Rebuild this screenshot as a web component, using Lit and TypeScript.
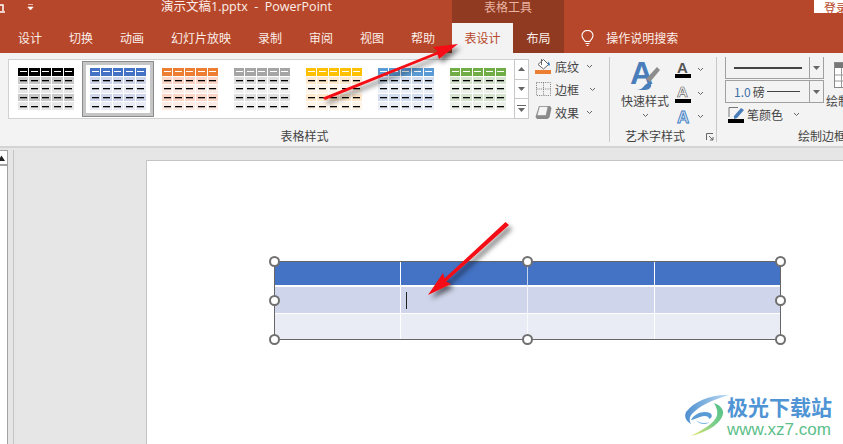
import { LitElement, html, css, svg } from "lit";
import { customElement } from "lit/decorators.js";

const thumbs = [
  ["#000000", "#c9c9c9", "#e7e7e7", "#fff"],
  ["#4472c4", "#cfd5ea", "#e9ebf5", "#fff"],
  ["#ed7d31", "#fbd5c6", "#fdece6", "#fff"],
  ["#a5a5a5", "#dedede", "#f0f0f0", "#fff"],
  ["#ffc000", "#ffe8cc", "#fff4e8", "#fff"],
  ["#5b9bd5", "#d2deef", "#eaeff7", "#fff"],
  ["#70ad47", "#d5e3cf", "#ebf1e9", "#fff"],
];

const tabs = ["设计", "切换", "动画", "幻灯片放映", "录制", "审阅", "视图", "帮助"];

const chev = html`<svg class="chev" width="7" height="5" viewBox="0 0 7 5"><path d="M1 1l2.5 2.5L6 1" fill="none" stroke="#666" stroke-width="1"/></svg>`;
const tri = (up = false) => html`<svg width="9" height="6" viewBox="0 0 9 6"><path d="${up ? "M4.5 1L8 5H1z" : "M1 1h7L4.5 5z"}" fill="#666"/></svg>`;

@customElement("app-root")
export class AppRoot extends LitElement {
  static styles = css`
    :host { display: block; width: 843px; height: 444px; position: relative; overflow: hidden;
      font-family: "Noto Sans CJK SC", "Liberation Sans", sans-serif; font-size: 12px; color: #333; background: #e6e6e6; }
    .page { display: flex; flex-direction: column; height: 444px; }
    .titlebar { height: 23px; flex: none; background: #b7472a; display: flex; align-items: flex-start; color: #fff; }
    .qa { width: 36px; height: 13px; display: flex; flex: none; align-items: center; gap: 21px; padding-top: 1px; }
    .doc { width: 291px; margin-left: 125px; flex: none; line-height: 13px; white-space: pre; font-family: "Open Sans", "Noto Sans CJK SC", sans-serif; font-size: 12.5px; color: #fbeee9; }
    .cap { width: 112px; height: 23px; flex: none; background: #8f3a21; color: #e9b4a2; text-align: center; line-height: 13px; }
    .login { width: 19px; height: 13px; margin-left: 250px; flex: none; background: #fff; color: #b7472a; line-height: 16px; padding-left: 10px; white-space: nowrap; overflow: hidden; }
    .tabs { height: 30px; flex: none; background: #b7472a; display: flex; align-items: stretch; color: #fff; padding-left: 18px; }
    .tab { margin-right: 27px; line-height: 30px; color: #fbeee9; white-space: nowrap; }
    .tab.last { margin-right: 17px; }
    .active { background: #f3f3f3; color: #b7472a; width: 61px; text-align: center; line-height: 30px; flex: none; }
    .layout { background: #8f3a21; color: #fbeee9; width: 51px; text-align: center; line-height: 30px; flex: none; }
    .bulb { margin-left: 17px; margin-right: 12px; align-self: center; display: flex; }
    .help { line-height: 30px; color: #fbeee9; }
    .ribbon { height: 93px; flex: none; background: #f3f3f3; border-bottom: 2px solid #d4d4d4; display: flex; overflow: hidden; }
    .group { display: flex; flex-direction: column; flex: none; box-sizing: border-box; margin-top: 4px; margin-bottom: 4px; }
    .inner { margin-top: -4px; margin-bottom: -4px; display: flex; flex-direction: column; height: 93px; }
    .g1 { width: 610px; border-right: 1px solid #c8c8c8; }
    .g2 { width: 107px; border-right: 1px solid #c8c8c8; }
    .g3 { width: 126px; overflow: hidden; }
    .body { flex: 1; display: flex; min-height: 0; }
    .label { height: 19px; line-height: 17px; text-align: center; font-size: 12px; color: #444; flex: none; white-space: nowrap; }
    .g1 .body { padding: 6px 0 0 8px; }
    .gallery { height: 60px; width: 507px; flex: none; box-sizing: border-box; background: #fff; border: 1.5px solid #d2d2d2; display: flex; align-items: flex-start; padding: 1px 0 0 1px; }
    .item { width: 72px; height: 56px; flex: none; box-sizing: border-box; padding: 6px 7px; border: 1px solid transparent; }
    .item.sel { border: 1px solid #8b8b8b; outline: 3px solid #c6c6c6; outline-offset: -4px; }
    .thumb { display: grid; grid-template-columns: repeat(5, 1fr); grid-template-rows: repeat(5, 1fr); gap: 1px; width: 56px; height: 42px; }
    .cell { display: flex; align-items: center; justify-content: center; }
    .dash { width: 7px; height: 1px; display: block; background: #000; box-shadow: 0 1px 0 rgba(0,0,0,.3); }
    .dash.w { background: #fff; box-shadow: none; }
    .scroll { width: 15px; height: 60px; flex: none; box-sizing: border-box; border: 1px solid #c8c8c8; display: flex; flex-direction: column; background: #fff; margin-left: -1px; }
    .scroll div { flex: 1; display: flex; align-items: center; justify-content: center; border-bottom: 1px solid #c8c8c8; }
    .scroll div:last-child { border-bottom: none; flex-direction: column; gap: 1px; }
    .bar { width: 9px; height: 1px; background: #666; display: block; }
    .cmds { margin-left: 6px; display: flex; flex-direction: column; gap: 7px; margin-top: -1px; }
    .cmd { height: 16px; display: flex; align-items: center; gap: 3px; white-space: nowrap; color: #444; }
    .cmd svg.ic { width: 17px; height: 16px; flex: none; }
    .cmd .chev { margin-left: 4px; }
    .cmd .chev.far { margin-left: 7px; }
    .g2 .body { padding: 6px 0 0 10px; gap: 5px; }
    .quick { display: flex; flex-direction: column; align-items: center; width: 50px; color: #444; }
    .quick span { line-height: 14px; margin-top: 2px; white-space: nowrap; }
    .quick .chev { margin-top: 5px; }
    .abc { display: flex; flex-direction: column; gap: 3px; }
    .abc div { display: flex; align-items: center; gap: 5px; height: 21px; }
    .g2 .label { display: flex; padding-left: 15px; align-items: flex-start; }
    .launch { margin: 6px 0 0 21px; display: block; }
    .g3 .body { padding: 3px 0 0 8px; gap: 2px; }
    .lines { width: 99px; flex: none; display: flex; flex-direction: column; }
    .ls { height: 23px; box-sizing: border-box; border: 1.5px solid #a0a0a0; display: flex; margin-bottom: 1px; }
    .ls .m { flex: 1; display: flex; align-items: center; padding-left: 8px; gap: 2px; color: #444; }
    .ls .d { width: 13px; border-left: 1.5px solid #a0a0a0; display: flex; align-items: center; justify-content: center; }
    .thick { width: 68px; height: 2px; background: #444; display: block; }
    .thin { width: 33px; height: 1px; background: #444; display: block; }
    .num { color: #3d6fa8; }
    .pen { display: flex; align-items: center; gap: 2px; margin-top: 1px; margin-left: 3px; height: 18px; color: #444; }
    .pen .chev { margin-left: 8px; }
    .draw { display: flex; flex-direction: column; width: 20px; flex: none; }
    .draw svg { margin: 6px 0 0 8px; }
    .draw span { line-height: 14px; margin-top: 6px; white-space: nowrap; color: #444; }
    .g3 .label { text-align: left; padding-left: 81px; }
    .work { flex: 1; display: flex; min-height: 0; padding-top: 2px; }
    .pane { width: 8px; flex: none; box-sizing: border-box; background: #fff; border-right: 1px solid #a3a3a3; border-top: 1px solid #a3a3a3; }
    .panehead { height: 13px; border-bottom: 2px solid #a3a3a3; background: #fff; display: flex; align-items: center; }
    .rail { width: 1px; flex: none; margin-left: 5px; background: #c4c4c4; }
    .slide { flex: 1; margin: 10px 0 0 132px; background: #fff; border: 1px solid #c4c4c4; border-width: 1px 0 0 1px; padding: 100px 0 0 127px; min-width: 0; }
    .table { width: 507px; height: 79px; box-sizing: border-box; border: 1px solid #666; position: relative; display: grid; grid-template-columns: 125px 127px 127px 1fr; grid-template-rows: 25px 27px 1fr; }
    .c { border-left: 1px solid #fff; box-sizing: border-box; }
    .c:nth-child(4n+1) { border-left: none; }
    .c:nth-child(4n+3) { border-left-color: rgba(255,255,255,.7); }
    .c.h { background: #4472c4; border-bottom: 2px solid #fff; }
    .c.a { background: #cfd5ea; border-bottom: 1px solid #fff; }
    .c.b { background: #e9ebf5; }
    .caret { display: block; width: 1px; height: 17px; background: #222; margin: 5px 0 0 5px; }
    .hd { position: absolute; width: 11px; height: 11px; box-sizing: border-box; border: 2px solid #707070; border-radius: 50%; background: #fff; }
    .x0 { left: -6px; } .x1 { left: 247px; } .x2 { left: 500px; }
    .y0 { top: -6px; } .y1 { top: 33px; } .y2 { top: 72px; }
    .arrows { position: absolute; left: 0; top: 0; pointer-events: none; }
    .mark { position: absolute; left: 684px; top: 392px; width: 150px; height: 46px; display: flex; }
    .marktext { display: flex; flex-direction: column; margin-left: -5px; }
    .cn { font-size: 21px; font-weight: 700; line-height: 26px; color: #4f94d4; white-space: nowrap; margin-top: 1px; }
    .en { font-family: "Liberation Sans", sans-serif; font-size: 17px; line-height: 17px; color: #5cc08a; white-space: nowrap; margin-top: 2px; }
  `;

  render() {
    const bands = [0, 1, 2, 1, 2];
    return html`
      <div class="page">
        <div class="titlebar">
          <div class="qa">
            <svg width="6" height="12" viewBox="0 0 6 12"><path d="M0 3h3v6M-1 10h6" fill="none" stroke="#fff" stroke-width="1.5"/></svg>
            <svg width="7" height="7" viewBox="0 0 7 7"><path d="M1 .5h5M0.8 3h5.4L3.5 6z" fill="#fff" stroke="#fff" stroke-width=".6"/></svg>
          </div>
          <div class="doc">演示文稿1.pptx  -  PowerPoint</div>
          <div class="cap">表格工具</div>
          <div class="login">登录</div>
        </div>
        <div class="tabs">
          ${tabs.map((t, i) => html`<div class="tab ${i === tabs.length - 1 ? "last" : ""}">${t}</div>`)}
          <div class="active">表设计</div>
          <div class="layout">布局</div>
          <div class="bulb"><svg width="13" height="17" viewBox="0 0 13 17"><path d="M4.2 11.5C3.6 9.6 1 8.6 1 5.6a5.5 5.2 0 0 1 11 0c0 3-2.6 4-3.2 5.9zM4.5 13.5h4M5.5 15.5h2" fill="none" stroke="#fff" stroke-width="1.1"/></svg></div>
          <div class="help">操作说明搜索</div>
        </div>
        <div class="ribbon">
          <div class="group g1">
            <div class="inner">
              <div class="body">
                <div class="gallery">
                  ${thumbs.map((t, i) => html`<div class="item ${i === 1 ? "sel" : ""}">
                    <div class="thumb">
                      ${bands.map((b, r) => [0, 1, 2, 3, 4].map(() => html`<div class="cell" style="background:${t[b]}"><i class="dash ${r === 0 ? "w" : ""}"></i></div>`))}
                    </div>
                  </div>`)}
                </div>
                <div class="scroll">
                  <div>${tri(true)}</div>
                  <div>${tri()}</div>
                  <div><i class="bar"></i>${tri()}</div>
                </div>
                <div class="cmds">
                  <div class="cmd">
                    <svg class="ic" viewBox="0 0 17 16"><path d="M3 6.5L8.5 1.5l5 5-5 4.5z" fill="#fff" stroke="#666"/><path d="M13 3.5c1.5 1.5 2.5 3 1.5 4s-2-1-1.500-4z" fill="#3d78b8"/><path d="M6.500 1v6" stroke="#666"/><rect x="0" y="12" width="16" height="4" fill="#ed7d31"/></svg>
                    底纹${chev}
                  </div>
                  <div class="cmd">
                    <svg class="ic" viewBox="0 0 17 16"><path d="M1.500 1.500h14v13h-14zM8.500 1.500v13M1.500 8h14" fill="none" stroke="#777" stroke-dasharray="1 1.200"/></svg>
                    边框<svg class="chev far" width="7" height="5" viewBox="0 0 7 5"><path d="M1 1l2.500 2.500L6 1" fill="none" stroke="#666"/></svg>
                  </div>
                  <div class="cmd">
                    <svg class="ic" viewBox="0 0 17 16"><path d="M4 2h11l1.500 2-2 9.500-2 1.500H2L.5 13z" fill="#8a8a8a"/><path d="M4.500 2.500H13L11 11.500H2z" fill="#f4f4f4" stroke="#8a8a8a" stroke-width=".6"/></svg>
                    效果${chev}
                  </div>
                </div>
              </div>
              <div class="label">表格样式</div>
            </div>
          </div>
          <div class="group g2">
            <div class="inner">
              <div class="body">
                <div class="quick">
                  <svg width="30" height="33" viewBox="0 0 30 33">
                    <text x="0" y="25" font-family="Liberation Sans, sans-serif" font-weight="700" font-size="32" fill="#4a7ebb">A</text>
                    <path d="M16 20L27 8l3 3-10 12z" fill="#8d8d8d"/>
                    <path d="M6 31c4 0 7-2 9-5 2-2 5-3 6-1 1 3-2 6-6 6z" fill="#4a7ebb"/>
                  </svg>
                  <span>快速样式</span>
                  ${chev}
                </div>
                <div class="abc">
                  <div><svg width="17" height="19" viewBox="0 0 17 19"><text x="2" y="13" font-family="Liberation Sans, sans-serif" font-weight="700" font-size="15" fill="#555">A</text><rect x="0" y="14" width="16" height="4" fill="#000"/></svg>${chev}</div>
                  <div><svg width="17" height="19" viewBox="0 0 17 19"><text x="2" y="13" font-family="Liberation Sans, sans-serif" font-weight="700" font-size="15" fill="#fff" stroke="#666" stroke-width=".7">A</text><rect x="0" y="15" width="16" height="4" fill="#000"/></svg>${chev}</div>
                  <div><svg width="17" height="19" viewBox="0 0 17 19"><text x="2" y="16" font-family="Liberation Sans, sans-serif" font-weight="700" font-size="17" fill="#dbe8f6" stroke="#3f7fc4" stroke-width=".9">A</text></svg>${chev}</div>
                </div>
              </div>
              <div class="label">艺术字样式
                <svg class="launch" width="8" height="8" viewBox="0 0 8 8"><path d="M.5 7V.5H7M3 3l4 4M7 4v3H4" fill="none" stroke="#666"/></svg>
              </div>
            </div>
          </div>
          <div class="group g3">
            <div class="inner">
              <div class="body">
                <div class="lines">
                  <div class="ls"><div class="m"><i class="thick"></i></div><div class="d">${tri()}</div></div>
                  <div class="ls"><div class="m"><span class="num">1.0</span> 磅<i class="thin"></i></div><div class="d">${tri()}</div></div>
                  <div class="pen">
                    <svg width="17" height="17" viewBox="0 0 17 17"><path d="M1 11V1.500h9" fill="none" stroke="#777"/><path d="M6 10l7-8 3 2-7 8-3 1z" fill="#4a7ebb"/><rect x="0" y="13" width="16" height="4" fill="#000"/></svg>
                    笔颜色${chev}
                  </div>
                </div>
                <div class="draw">
                  <svg width="12" height="26" viewBox="0 0 12 26"><rect x=".5" y=".5" width="30" height="25" fill="#fff" stroke="#888"/><rect x="1" y="1" width="30" height="5" fill="#777"/><path d="M7.500 6v19M1 13h30M1 19h30" stroke="#999"/></svg>
                  <span>绘制</span>
                </div>
              </div>
              <div class="label">绘制边框</div>
            </div>
          </div>
        </div>
        <div class="work">
          <div class="pane">
            <div class="panehead"><svg width="7" height="6" viewBox="0 0 7 6"><path d="M-2 6L1.500 .5 5 6z" fill="#222"/></svg></div>
          </div>
          <div class="rail"></div>
          <div class="slide">
            <div class="table">
              ${[0, 1, 2, 3].map(() => html`<div class="c h"></div>`)}
              ${[0, 1, 2, 3].map((i) => html`<div class="c a">${i === 1 ? html`<i class="caret"></i>` : ""}</div>`)}
              ${[0, 1, 2, 3].map(() => html`<div class="c b"></div>`)}
              ${["x0 y0", "x1 y0", "x2 y0", "x0 y1", "x2 y1", "x0 y2", "x1 y2", "x2 y2"].map((p) => html`<span class="hd ${p}"></span>`)}
            </div>
          </div>
        </div>
      </div>
      <svg class="arrows" width="843" height="444" viewBox="0 0 843 444">
        <defs>
          <filter id="sh" x="-20%" y="-20%" width="150%" height="160%"><feDropShadow dx="3" dy="4" stdDeviation="2.500" flood-color="#000" flood-opacity=".55"/></filter>
        </defs>
        ${svg`<g filter="url(#sh)" fill="#f40f12">
          <path d="M323 97.500L438 51.500 433 47 458 44 439 59 437.500 54.500 325 100z"/>
          <path d="M505.500 222L509 225 446 281.500 451 284 428 295 443 273 444.500 278.500z"/>
        </g>`}
      </svg>
      <div class="mark">
        <svg width="48" height="46" viewBox="0 0 48 46">
          <defs>
            <linearGradient id="w1" x1="0" y1="0" x2="1" y2="0"><stop offset="0" stop-color="#4f8fd0"/><stop offset="1" stop-color="#bcdcf2"/></linearGradient>
            <linearGradient id="w2" x1="0" y1="1" x2="1" y2="0"><stop offset="0" stop-color="#e6e66a"/><stop offset=".5" stop-color="#7fd08a"/><stop offset="1" stop-color="#4fbf88"/></linearGradient>
          </defs>
          <path d="M45 3C28 2 10 9 2 20c-2 5 0 9 5 12-2-4-2-8 3-12C18 12 32 7 45 3z" fill="url(#w1)"/>
          <path d="M7 28c3-6 12-10 19-7 3 2 2 5-1 6 0-3-4-4-9-2-4 1-7 3-9 3z" fill="#5b9bd5"/>
          <path d="M12 28c3 3 9 4 14 2-4 3-11 3-14-2z" fill="#7db7e0"/>
          <path d="M30 11c8 3 11 8 8 14-4 9-18 16-31 19 9-5 24-12 26-21 1-5-1-8-3-12z" fill="url(#w2)"/>
        </svg>
        <div class="marktext">
          <div class="cn">极光下载站</div>
          <div class="en">www.xz7.com</div>
        </div>
      </div>
    `;
  }
}
